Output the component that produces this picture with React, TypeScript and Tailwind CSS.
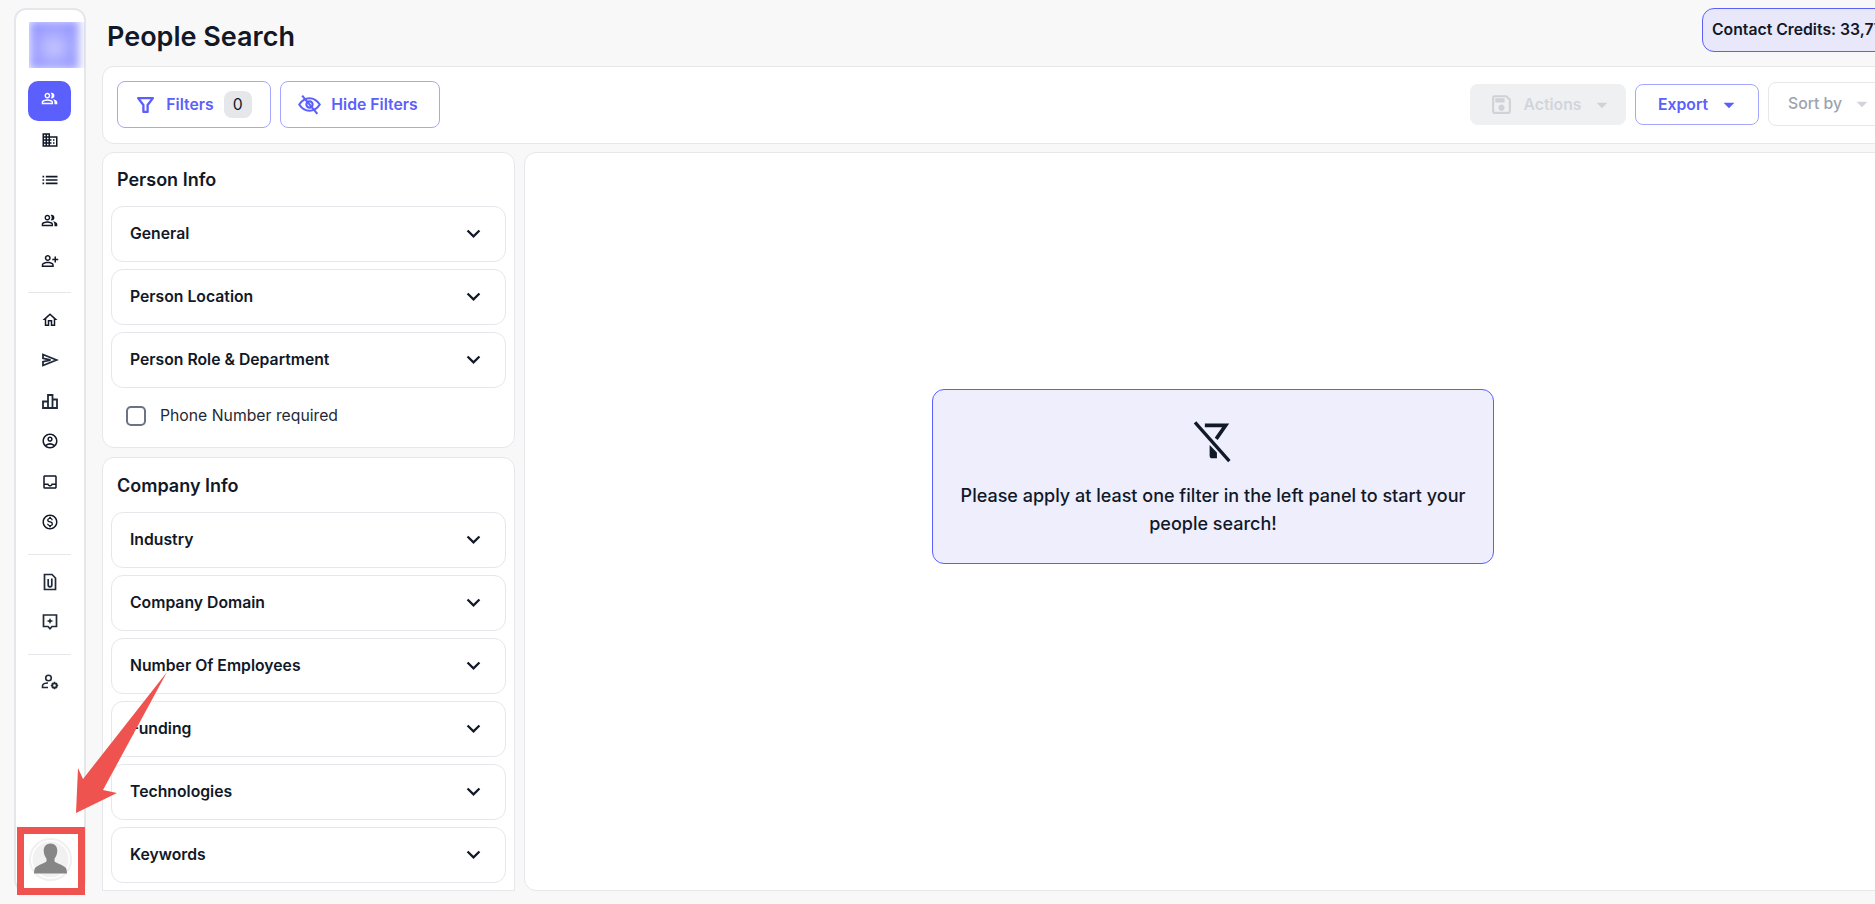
import React from "react";
import {
  MdOutlinePeopleAlt,
  MdDomain,
  MdList,
  MdOutlinePersonAddAlt,
  MdOutlineHome,
  MdOutlineInbox,
  MdOutlineAccountCircle,
  MdOutlineMonetizationOn,
  MdOutlineSave,
  MdOutlineKeyboardArrowDown,
  MdArrowDropDown,
} from "react-icons/md";

const Icon = ({ children }: { children: React.ReactNode }) => (
  <div className="flex h-[40.5px] w-[43px] items-center justify-center pb-[3px] text-[18px] text-[#111827]">{children}</div>
);

const Accordion = ({ label }: { label: string }) => (
  <div className="flex h-[56px] shrink-0 items-center justify-between rounded-[12px] border border-[#e5e7eb] bg-white pl-[18px] pr-[18px]">
    <span className="text-[15.75px] font-semibold text-[#111827]">{label}</span>
    <MdOutlineKeyboardArrowDown className="mb-[2px] text-[27px] text-[#111827]" />
  </div>
);

const Divider = () => <div className="h-px w-[43px] bg-[#e5e7eb]" />;

const ChartIcon = () => (
  <svg width="18" height="18" viewBox="0 0 18 18" fill="none" stroke="#1f2937" strokeWidth="1.8">
    <path d="M2 16V9.500h5V16zM7 16V3h4.500v13zM11.500 16V7.500H16V16z" />
  </svg>
);
const SendIcon = () => (
  <svg width="18" height="18" viewBox="0 0 18 18" fill="none" stroke="#1f2937" strokeWidth="1.8">
    <path d="M2 3.500L15.500 9 2 14.500v-3.800L9.500 9 2 7.300z" />
  </svg>
);
const DocIcon = () => (
  <svg width="18" height="18" viewBox="0 0 18 18" fill="none" stroke="#1f2937" strokeWidth="1.7">
    <path d="M3.500 1.500H11L14.500 5v11.500h-11z" />
    <path d="M10.800 5.500v6.500a1.800 1.800 0 0 1-3.600 0V6" />
  </svg>
);
const AddDocIcon = () => (
  <svg width="18" height="18" viewBox="0 0 18 18" fill="none">
    <path d="M2.500 2h13v11.500H11l-2 2.300-2-2.300H2.500z" stroke="#1f2937" strokeWidth="1.700" />
    <path d="M9 4.500C9.400 6.800 10.200 7.600 12.500 8 10.200 8.400 9.400 9.200 9 11.500 8.600 9.200 7.800 8.400 5.500 8 7.800 7.600 8.600 6.800 9 4.500z" fill="#1f2937" />
  </svg>
);
const UserGearIcon = () => (
  <svg width="18" height="18" viewBox="0 0 18 18" fill="none" stroke="#1f2937" strokeWidth="1.6">
    <circle cx="7.500" cy="5" r="2.800" />
    <path d="M7 10c-3 0-5.500 1-5.500 3v1.500H7" />
    <circle cx="13.500" cy="12.500" r="2.200" strokeWidth="1.800" />
    <path d="M13.500 8.800v1.200M13.500 15v1.200M9.800 12.500H11M16 12.500h1.200M11 10l.7.7M15.300 14.300l.7.7M11 15l.7-.7M15.300 10.700l.7-.7" />
  </svg>
);
const FilterIcon = () => (
  <svg width="19" height="19" viewBox="0 0 18 18" fill="none" stroke="#5b5ffb" strokeWidth="2.200" strokeLinejoin="round">
    <path d="M2 3h14l-5 6.500V16H7V9.500z" />
  </svg>
);
const EyeOffIcon = () => (
  <svg width="23" height="23" viewBox="0 0 22 22" fill="none" stroke="#5b5ffb" strokeWidth="2">
    <path d="M1.200 11C3.800 7 7 5 11 5s7.200 2 9.800 6c-2.600 4-5.800 6-9.800 6s-7.200-2-9.800-6z" />
    <circle cx="11" cy="11" r="3" />
    <path d="M4 2.500L18.500 20" />
  </svg>
);
const FilterOffIcon = () => (
  <svg className="mr-[3px]" width="40" height="42" viewBox="725 128 103 115" fill="none">
    <path d="M757 140H814L788 177" stroke="#111827" strokeWidth="10" />
    <path d="M770 194L790 214V230H777a7 7 0 0 1-7-7z" fill="#111827" />
    <path d="M730 132L824 238" stroke="#111827" strokeWidth="9" />
  </svg>
);

const Avatar = () => (
  <svg width="43" height="43" viewBox="0 0 43 43">
    <circle cx="21.500" cy="21.500" r="20.500" fill="#ffffff" stroke="#f0f0f0" strokeWidth="2" />
    <circle cx="21.500" cy="21.500" r="18" fill="#f1f1f1" />
    <path
      d="M21.500 5.500c4.200 0 6.800 3 6.800 7.300 0 3.200-1.300 6-2.800 8v2.400c1 2 8 3 11.500 6.800.5.800.8 2 1 5.500H5c.2-3.500.5-4.700 1-5.500 3.500-3.800 10.500-4.800 11.500-6.800v-2.400c-1.500-2-2.800-4.800-2.800-8 0-4.300 2.600-7.300 6.800-7.300z"
      fill="#868686"
    />
  </svg>
);

export default function App() {
  const font = { fontFamily: "Inter, 'Liberation Sans', sans-serif" };
  return (
    <div style={font} className="relative flex h-[904px] w-[1875px] overflow-hidden bg-[#f8f8f8] pl-[14px] pt-[8px]">
      <aside className="flex h-[884px] w-[72px] shrink-0 flex-col items-center rounded-[12px] border-2 border-[#e5e7eb] bg-white pr-[1px] pt-[12px]">
        <div className="relative ml-[14px] h-[46px] w-[56px] shrink-0 overflow-hidden">
          <div className="h-[50px] w-[50px] -translate-y-[2px] bg-[radial-gradient(circle_at_50%_55%,#c9caff_0%,#a3a5ff_45%,#8e90ff_100%)] blur-[5px]" />
        </div>
        <div className="mt-[13px] flex h-[40px] w-[43px] items-center justify-center rounded-[10px] bg-[#5b5ffb] pb-[5px] text-[17px] text-white">
          <MdOutlinePeopleAlt />
        </div>
        <Icon><MdDomain /></Icon>
        <Icon><MdList className="text-[20px]" /></Icon>
        <Icon><MdOutlinePeopleAlt className="text-[17px]" /></Icon>
        <Icon><MdOutlinePersonAddAlt /></Icon>
        <div className="h-[9px]" />
        <Divider />
        <div className="h-[8px]" />
        <Icon><MdOutlineHome /></Icon>
        <Icon><SendIcon /></Icon>
        <Icon><ChartIcon /></Icon>
        <Icon><MdOutlineAccountCircle /></Icon>
        <Icon><MdOutlineInbox /></Icon>
        <Icon><MdOutlineMonetizationOn /></Icon>
        <div className="h-[10px]" />
        <Divider />
        <div className="h-[8px]" />
        <Icon><DocIcon /></Icon>
        <Icon><AddDocIcon /></Icon>
        <div className="h-[10px]" />
        <Divider />
        <div className="h-[8px]" />
        <Icon><UserGearIcon /></Icon>
        <div className="mt-auto mb-[9px] ml-[1px]">
          <Avatar />
        </div>
      </aside>

      <main className="ml-[16px] flex h-[883px] w-[1800px] shrink-0 flex-col">
        <header className="flex h-[44px] shrink-0 items-start justify-between pl-[5px]">
          <h1 className="pt-[13px] text-[27px] font-semibold leading-[32px] text-[#111827]">People Search</h1>
          <div className="flex h-[44px] w-[200px] items-center rounded-[12px] border border-[#5b5ffb] bg-[#e9e8fb] pl-[9px] text-[15.75px] font-semibold whitespace-nowrap text-[#111827]">
            Contact Credits: 33,770
          </div>
        </header>

        <div className="mt-[14px] flex h-[78px] w-[1801px] shrink-0 items-center justify-between rounded-[12px] border border-[#e5e7eb] bg-white pb-[2px] pl-[14px]">
          <div className="flex gap-[9px]">
            <button className="flex h-[47px] w-[154px] items-center justify-center rounded-[8px] border border-[#a5a7fd] pt-[1px] text-[15.75px] font-semibold text-[#5b5ffb]">
              <FilterIcon />
              <span className="ml-[11px]">Filters</span>
              <span className="ml-[10px] flex h-[27px] w-[28px] items-center justify-center rounded-[8px] bg-[#e5e7eb] font-normal text-[#111827]">0</span>
            </button>
            <button className="flex h-[47px] w-[160px] items-center justify-center rounded-[8px] border border-[#a5a7fd] pr-[4px] pt-[1px] text-[15.75px] font-semibold text-[#5b5ffb]">
              <EyeOffIcon />
              <span className="ml-[10px]">Hide Filters</span>
            </button>
          </div>
          <div className="flex items-center gap-[9px]">
            <button className="flex h-[41px] w-[156px] items-center justify-center rounded-[8px] bg-[#eff0f2] pl-[8px] pt-[1px] text-[15.75px] font-semibold text-[#d1d5db]">
              <MdOutlineSave className="text-[25px] text-[#cfd2d6]" />
              <span className="ml-[10px]">Actions</span>
              <MdArrowDropDown className="ml-[8px] text-[26px] text-[#cfd2d6]" />
            </button>
            <button className="flex h-[41px] w-[124px] items-center justify-center rounded-[8px] border border-[#a5a7fd] pl-[6px] pt-[1px] text-[15.75px] font-semibold text-[#5b5ffb]">
              Export
              <MdArrowDropDown className="ml-[8px] text-[26px]" />
            </button>
            <div className="flex h-[44px] w-[134px] items-center rounded-[8px] border border-[#e5e7eb] pl-[19px] text-[15.75px] font-medium text-[#9ca3af]">
              Sort by
              <MdArrowDropDown className="ml-[7px] text-[26px] text-[#d1d5db]" />
            </div>
          </div>
        </div>

        <div className="mt-[8px] flex min-h-0 flex-1 gap-[9px]">
          <div className="flex w-[413px] shrink-0 flex-col gap-[9px] overflow-hidden">
            <section className="h-[296px] shrink-0 rounded-[12px] border border-[#e5e7eb] bg-white px-[8px]">
              <h2 className="ml-[6px] pt-[15px] text-[18px] font-semibold leading-[24px] text-[#111827]">Person Info</h2>
              <div className="mt-[14px] flex flex-col gap-[7px]">
                <Accordion label="General" />
                <Accordion label="Person Location" />
                <Accordion label="Person Role & Department" />
              </div>
              <label className="mt-[16px] ml-[15px] flex items-center gap-[14px] text-[15.75px] text-[#1f2937]">
                <span className="h-[20px] w-[20px] rounded-[5px] border-2 border-[#6b7280]" />
                Phone Number required
              </label>
            </section>
            <section className="flex-1 overflow-hidden rounded-t-[12px] border border-[#e5e7eb] bg-white px-[8px]">
              <h2 className="ml-[6px] pt-[16px] text-[18px] font-semibold leading-[24px] text-[#111827]">Company Info</h2>
              <div className="mt-[14px] flex flex-col gap-[7px]">
                {["Industry", "Company Domain", "Number Of Employees", "Funding", "Technologies", "Keywords", ""].map((l, i) => (
                  <Accordion key={i} label={l} />
                ))}
              </div>
            </section>
          </div>
          <section className="flex flex-1 items-center justify-center rounded-[12px] border border-[#e5e7eb] bg-white pb-[90px]">
            <div className="flex h-[175px] w-[562px] flex-col items-center rounded-[12px] border border-[#5b5ffb] bg-[#eeeefd] px-[20px] pt-[31px] text-center">
              <FilterOffIcon />
              <p className="mt-[19px] text-[18px] font-medium leading-[27.5px] text-[#111827]">
                Please apply at least one filter in the left panel to start your people search!
              </p>
            </div>
          </section>
        </div>
      </main>

      <svg className="absolute left-[70px] top-[670px]" width="110" height="155" viewBox="0 0 110 155">
        <path d="M97 2L13 109 8 98 6 143 47 123 33 120z" fill="#ef5350" />
      </svg>
      <div className="absolute left-[17px] top-[827px] h-[68px] w-[68px] border-[7px] border-[#ef5350]" />
    </div>
  );
}
